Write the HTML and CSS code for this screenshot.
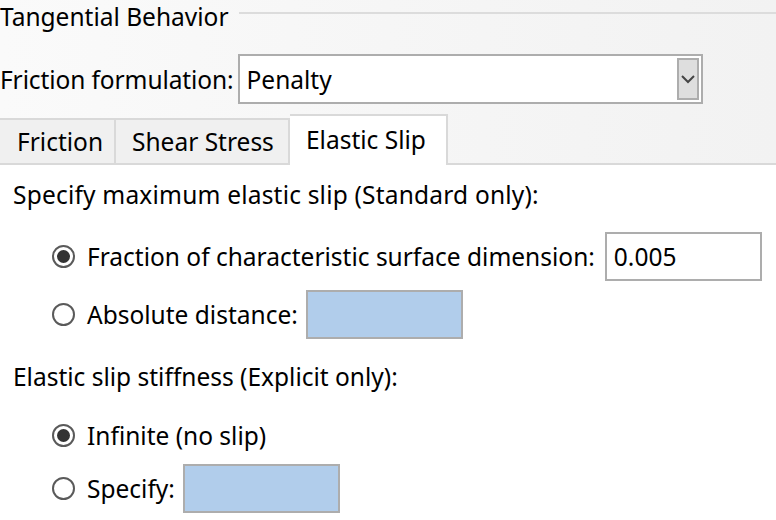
FILE: index.html
```html
<!DOCTYPE html>
<html>
<head>
<meta charset="utf-8">
<link rel="stylesheet" href="styles.css">
</head>
<body>
<div class="page">
  <div class="legend">
    <span class="legend-text">Tangential Behavior</span>
    <span class="legend-line"></span>
  </div>
  <div class="formrow">
    <span class="label">Friction formulation:</span>
    <div class="combo">
      <span class="combo-value">Penalty</span>
      <span class="combo-btn">
        <svg width="14" height="10" viewBox="0 0 14 10"><path d="M1 2 L7 8 L13 2" fill="none" stroke="#444" stroke-width="2"/></svg>
      </span>
    </div>
  </div>
  <div class="tabs">
    <div class="tab tab-first">Friction</div>
    <div class="tab tab-second">Shear Stress</div>
    <div class="tab tab-active">Elastic Slip</div>
    <div class="tab-fill"></div>
  </div>
  <div class="pane">
    <div class="heading h1">Specify maximum elastic slip (Standard only):</div>
    <div class="radiorow r1">
      <span class="radio checked"></span>
      <span class="rlabel">Fraction of characteristic surface dimension:</span>
      <span class="field f1">0.005</span>
    </div>
    <div class="radiorow r2">
      <span class="radio"></span>
      <span class="rlabel">Absolute distance:</span>
      <span class="field disabled"></span>
    </div>
    <div class="heading h2">Elastic slip stiffness (Explicit only):</div>
    <div class="radiorow r3">
      <span class="radio checked"></span>
      <span class="rlabel">Infinite (no slip)</span>
    </div>
    <div class="radiorow r4">
      <span class="radio"></span>
      <span class="rlabel">Specify:</span>
      <span class="field disabled"></span>
    </div>
  </div>
</div>
</body>
</html>
```
FILE: styles.css
```css
html, body {
  margin: 0;
  padding: 0;
  width: 776px;
  height: 520px;
  overflow: hidden;
}
body {
  font-family: "Noto Sans", "Open Sans", sans-serif;
  font-size: 24.5px;
  color: #000;
  background: #fff;
}
.page {
  width: 776px;
  height: 520px;
  display: flex;
  flex-direction: column;
}
.legend, .formrow, .tabs {
  background: linear-gradient(to right, #fafafa, #f2f2f2);
}
.legend {
  display: flex;
  height: 36px;
  align-items: flex-start;
}
.legend-text {
  line-height: 34px;
  white-space: nowrap;
}
.legend-line {
  flex: 1;
  margin-top: 12px;
  margin-left: 10px;
  border-top: 2px solid #dcdcdc;
}
.formrow {
  display: flex;
  align-items: center;
  padding-top: 18px;
  padding-bottom: 10px;
}
.label {
  white-space: nowrap;
  margin-right: 4px;
  letter-spacing: -0.1px;
}
.combo {
  box-sizing: border-box;
  width: 465px;
  height: 50px;
  border: 2px solid #adadad;
  background: #fff;
  display: flex;
  align-items: center;
  justify-content: space-between;
  padding-left: 7px;
}
.combo-btn {
  box-sizing: border-box;
  width: 22px;
  height: 42px;
  border: 2px solid #adadad;
  background: #dedede;
  margin-right: 2px;
  display: flex;
  align-items: center;
  justify-content: center;
}
.tabs {
  display: flex;
  align-items: flex-end;
  height: 51px;
}
.tab {
  box-sizing: border-box;
  height: 47px;
  line-height: 43px;
  background: #f0f0f0;
  border-top: 2px solid #d9d9d9;
  border-right: 2px solid #d9d9d9;
  border-bottom: 2px solid #d9d9d9;
  white-space: nowrap;
}
.tab-first {
  width: 116px;
  padding-left: 17px;
}
.tab-second {
  width: 174px;
  padding-left: 16px;
}
.tab-active {
  width: 158px;
  background: #fff;
  height: 51px;
  line-height: 47px;
  border-bottom: none;
  padding-left: 16px;
}
.tab-fill {
  flex: 1;
  border-bottom: 2px solid #d9d9d9;
}
.pane {
  flex: 1;
  background: #fff;
  padding-left: 13px;
  display: flex;
  flex-direction: column;
}
.heading {
  height: 30px;
  line-height: 30px;
  white-space: nowrap;
}
.h1 { margin-top: 15px; letter-spacing: 0.2px; }
.h2 { margin-top: 23px; }
.radiorow {
  display: flex;
  align-items: center;
  height: 49px;
  margin-left: 39px;
}
.r1 { margin-top: 22px; }
.r2 { margin-top: 9px; }
.r3 { margin-top: 19px; }
.r4 { margin-top: 4px; }
.radio {
  box-sizing: border-box;
  width: 23px;
  height: 23px;
  border: 2px solid #5a5a5a;
  border-radius: 50%;
  background: #fff;
  position: relative;
  flex: none;
}
.radio.checked::after {
  content: "";
  position: absolute;
  left: 3px;
  top: 3px;
  width: 13px;
  height: 13px;
  border-radius: 50%;
  background: #333;
}
.rlabel {
  margin-left: 12px;
  white-space: nowrap;
}
.field {
  box-sizing: border-box;
  margin-left: 8px;
  width: 157px;
  height: 49px;
  line-height: 45px;
  border: 2px solid #adadad;
  background: #fff;
  padding-left: 7px;
}
.field.f1 {
  margin-left: 10px;
}
.field.disabled {
  background: #b1cdeb;
}
```
